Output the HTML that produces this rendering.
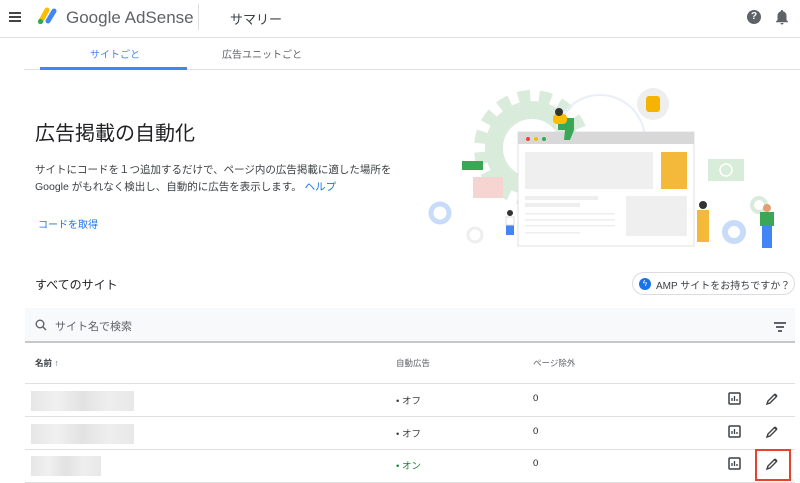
<!DOCTYPE html><html><head><meta charset="utf-8"><style>
*{margin:0;padding:0;box-sizing:border-box}
body{width:800px;height:483px;overflow:hidden;background:#fff;font-family:"Liberation Sans","Noto Sans CJK JP",sans-serif;color:#202124;position:relative}
.a{position:absolute}
.blur{position:absolute;background:linear-gradient(90deg,#e6e6e6,#f0f0f0,#e2e2e2,#eee,#e8e8e8);}
</style></head><body>
<div class="a" style="left:0;top:37px;width:800px;height:1px;background:#e0e0e0"></div>
<div class="a" style="left:9px;top:12px;width:12px;height:2px;background:#444;box-shadow:0 4px #444,0 8px #444"></div>
<svg class="a" style="left:36px;top:6px" width="22" height="20"><line x1="5" y1="15" x2="11" y2="4" stroke="#fbbc04" stroke-width="5" stroke-linecap="round"/><line x1="12" y1="15" x2="18" y2="5" stroke="#4285f4" stroke-width="5" stroke-linecap="round"/><circle cx="4.5" cy="15.5" r="2.6" fill="#34a853"/></svg>
<div class="a" style="left:66px;top:8px;font-size:17px;color:#5f6368">Google AdSense</div>
<div class="a" style="left:198px;top:4px;width:1px;height:26px;background:#e0e0e0"></div>
<div class="a" style="left:230px;top:9px;font-size:13px;color:#3c4043">サマリー</div>
<div class="a" style="left:747px;top:10px;width:14px;height:14px;border-radius:50%;background:#5f6368;color:#fff;font-size:10px;font-weight:bold;text-align:center;line-height:14px">?</div>
<svg class="a" style="left:775px;top:9px" width="14" height="16"><path d="M7 1a1 1 0 0 1 1 1.2A4.5 4.5 0 0 1 11.5 7v4l1.5 1.5v.8H1v-.8L2.5 11V7A4.5 4.5 0 0 1 6 2.2 1 1 0 0 1 7 1zM5.5 14h3a1.5 1.5 0 0 1-3 0z" fill="#5f6368"/></svg>
<div class="a" style="left:24px;top:69px;width:776px;height:1px;background:#e0e0e0"></div>
<div class="a" style="left:40px;top:67px;width:147px;height:3px;background:#4285f4"></div>
<div class="a" style="left:90px;top:46px;font-size:10px;color:#4285f4">サイトごと</div>
<div class="a" style="left:222px;top:46px;font-size:10px;color:#5f6368">広告ユニットごと</div>
<div class="a" style="left:35px;top:117px;font-size:20px;color:#202124">広告掲載の自動化</div>
<div class="a" style="left:35px;top:162px;font-size:10.5px;line-height:17px;color:#3c4043">サイトにコードを１つ追加するだけで、ページ内の広告掲載に適した場所を<br>Google がもれなく検出し、自動的に広告を表示します。 <span style="color:#1a73e8">ヘルプ</span></div>
<div class="a" style="left:38px;top:216px;font-size:10px;color:#1a73e8">コードを取得</div>
<svg class="a" style="left:420px;top:80px" width="380" height="180">
<circle cx="112" cy="68" r="52" fill="none" stroke="#d9ecdc" stroke-width="12" stroke-dasharray="12 9"/>
<circle cx="112" cy="68" r="38" fill="none" stroke="#d9ecdc" stroke-width="18"/>
<circle cx="180" cy="60" r="45" fill="none" stroke="#e8eefa" stroke-width="2"/>
<circle cx="233" cy="24" r="16" fill="#eee"/><rect x="226" y="16" width="14" height="16" rx="3" fill="#f4b400"/>
<rect x="98" y="52" width="176" height="114" fill="#fff" stroke="#e0e0e0"/>
<rect x="98" y="52" width="176" height="12" fill="#d8d8d8"/>
<circle cx="108" cy="59" r="2" fill="#ea4335"/><circle cx="116" cy="59" r="2" fill="#fbbc04"/><circle cx="124" cy="59" r="2" fill="#34a853"/>
<rect x="105" y="72" width="128" height="37" fill="#efefef"/>
<rect x="241" y="72" width="26" height="37" fill="#f4b83a"/>
<rect x="206" y="116" width="61" height="40" fill="#efefef"/>
<rect x="105" y="116" width="73" height="4" fill="#eee"/><rect x="105" y="123" width="55" height="4" fill="#eee"/>
<rect x="105" y="133" width="90" height="1.5" fill="#eee"/><rect x="105" y="139" width="90" height="1.5" fill="#eee"/><rect x="105" y="145" width="90" height="1.5" fill="#eee"/><rect x="105" y="152" width="55" height="1.5" fill="#eee"/>
<rect x="42" y="81" width="21" height="9" fill="#3aa757"/>
<rect x="53" y="97" width="30" height="21" fill="#f6d4d2"/>
<rect x="288" y="79" width="36" height="22" fill="#d7ecd9"/><circle cx="306" cy="90" r="6" fill="none" stroke="#fff" stroke-width="1.5"/>
<circle cx="20" cy="133" r="9" fill="none" stroke="#c9dbfa" stroke-width="5"/>
<circle cx="314" cy="152" r="9" fill="none" stroke="#c9dbfa" stroke-width="6"/>
<circle cx="55" cy="155" r="7" fill="none" stroke="#eee" stroke-width="3"/>
<circle cx="339" cy="125" r="7" fill="none" stroke="#d9ecdc" stroke-width="4"/>
<path d="M138 38h16v12l-4 10h-6l1-10h-7z" fill="#3aa757"/><rect x="133" y="34" width="14" height="10" rx="4" fill="#fbbc04"/><circle cx="139" cy="32" r="4" fill="#333"/>
<rect x="86" y="145" width="8" height="10" fill="#4285f4"/><rect x="86" y="137" width="8" height="8" fill="#fff" stroke="#ddd"/><circle cx="90" cy="133" r="3" fill="#333"/>
<rect x="277" y="130" width="12" height="32" fill="#f4b83a"/><circle cx="283" cy="125" r="4" fill="#333"/>
<rect x="340" y="132" width="14" height="14" fill="#3aa757"/><rect x="342" y="146" width="10" height="22" fill="#4285f4"/><circle cx="347" cy="128" r="4" fill="#e0a070"/>
</svg>
<div class="a" style="left:35px;top:276px;font-size:12px;color:#202124">すべてのサイト</div>
<div class="a" style="left:632px;top:272px;width:163px;height:23px;border:1px solid #dadce0;border-radius:12px"></div>
<div class="a" style="left:639px;top:278px;width:12px;height:12px;border-radius:50%;background:#1a73e8;color:#fff;font-size:8px;text-align:center;line-height:12px">ϟ</div>
<div class="a" style="left:656px;top:277px;font-size:10px;color:#3c4043">AMP サイトをお持ちですか？</div>
<div class="a" style="left:25px;top:308px;width:770px;height:35px;background:#f8f9fa;border-bottom:2px solid #c8c8c8"></div>
<svg class="a" style="left:35px;top:319px" width="12" height="12"><circle cx="5" cy="5" r="3.8" fill="none" stroke="#5f6368" stroke-width="1.4"/><line x1="8" y1="8" x2="11" y2="11" stroke="#5f6368" stroke-width="1.5"/></svg>
<div class="a" style="left:55px;top:318px;font-size:11px;color:#5f6368">サイト名で検索</div>
<div class="a" style="left:774px;top:322px;width:12px;height:1.5px;background:#5f6368"></div>
<div class="a" style="left:776px;top:326px;width:8px;height:1.5px;background:#5f6368"></div>
<div class="a" style="left:778px;top:330px;width:4px;height:1.5px;background:#5f6368"></div>
<div class="a" style="left:35px;top:357px;font-size:8.5px;color:#3c4043;font-weight:bold">名前 <span style="font-weight:normal;color:#5f6368">↑</span></div>
<div class="a" style="left:396px;top:357px;font-size:8.5px;color:#5f6368">自動広告</div>
<div class="a" style="left:533px;top:357px;font-size:8.5px;color:#5f6368">ページ除外</div>
<div class="a" style="left:25px;top:383px;width:770px;height:1px;background:#e0e0e0"></div>
<div class="a" style="left:25px;top:416px;width:770px;height:1px;background:#e0e0e0"></div>
<div class="a" style="left:25px;top:449px;width:770px;height:1px;background:#e0e0e0"></div>
<div class="a" style="left:25px;top:482px;width:770px;height:1px;background:#e0e0e0"></div>
<div class="blur" style="left:31px;top:391px;width:103px;height:20px"></div>
<div class="blur" style="left:31px;top:424px;width:103px;height:20px"></div>
<div class="blur" style="left:31px;top:456px;width:70px;height:20px"></div>
<div class="a" style="left:396px;top:393px;font-size:9.5px;color:#3c4043">• オフ</div>
<div class="a" style="left:396px;top:426px;font-size:9.5px;color:#3c4043">• オフ</div>
<div class="a" style="left:396px;top:458px;font-size:9.5px;color:#188038">• オン</div>
<div class="a" style="left:533px;top:393px;font-size:9.5px">0</div>
<div class="a" style="left:533px;top:426px;font-size:9.5px">0</div>
<div class="a" style="left:533px;top:458px;font-size:9.5px">0</div>
<svg width="0" height="0" style="position:absolute"><defs>
<g id="ch"><rect x="1" y="1" width="11" height="11" rx="1" fill="none" stroke="#3c4043" stroke-width="1.5"/><path d="M4 9V6M6.5 9V4M9 9V7" stroke="#3c4043" stroke-width="1.3"/></g>
<g id="pe"><path d="M2 12l1-3 6.5-6.5 2 2L5 11z" fill="none" stroke="#3c4043" stroke-width="1.4"/><path d="M9.5 2.5l1-1 2 2-1 1z" fill="#3c4043"/></g></defs></svg>
<svg class="a" style="left:728px;top:392px" width="14" height="14"><use href="#ch"/></svg>
<svg class="a" style="left:765px;top:392px" width="14" height="14"><use href="#pe"/></svg>
<svg class="a" style="left:728px;top:425px" width="14" height="14"><use href="#ch"/></svg>
<svg class="a" style="left:765px;top:425px" width="14" height="14"><use href="#pe"/></svg>
<svg class="a" style="left:728px;top:457px" width="14" height="14"><use href="#ch"/></svg>
<svg class="a" style="left:765px;top:457px" width="14" height="14"><use href="#pe"/></svg>
<div class="a" style="left:755px;top:449px;width:36px;height:32px;border:2px solid #e8412c"></div>
</body></html>
